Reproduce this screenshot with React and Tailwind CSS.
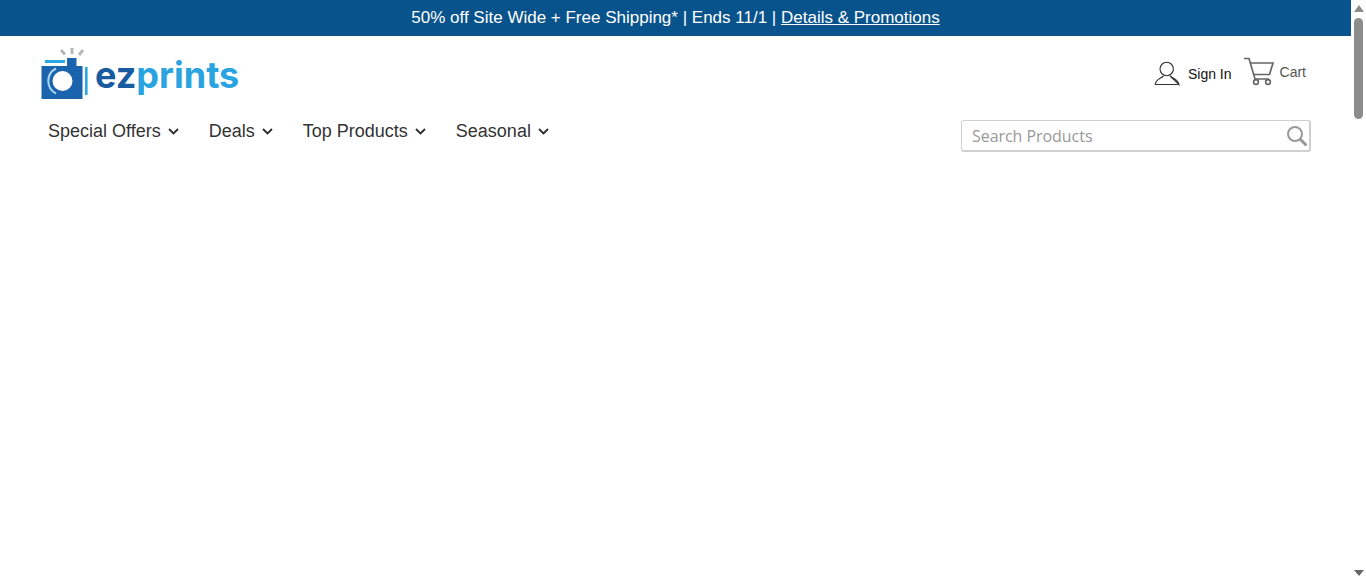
import React from "react";

function Logo() {
  return (
    <div className="flex items-end h-[52px]">
      <svg width="54" height="52" viewBox="0 0 54 52" className="shrink-0">
        <path d="M21 3 L25 7.5" stroke="#b5b8bb" strokeWidth="3" />
        <path d="M32 1 L32 7" stroke="#b5b8bb" strokeWidth="3" />
        <path d="M43 3 L39 8" stroke="#b5b8bb" strokeWidth="3" />
        <path d="M1.5 19 V52 H42.5 V19 H36.5 V11 H27 V19 Z" fill="#1a63ad" />
        <rect x="5" y="13" width="20" height="3" fill="#29a9e1" />
        <rect x="45" y="20" width="2.6" height="28" fill="#29a9e1" />
        <circle cx="22.5" cy="34" r="10" fill="#fff" />
        <path d="M16 46.5 A14 14 0 0 1 16 21.5" fill="none" stroke="#a8d6f0" strokeWidth="2" />
      </svg>
      <span className="ml-[1px] font-['Inter',sans-serif] font-bold text-[36px] leading-[40px] mb-[3px] relative top-[-1px]">
        <span className="text-[#175ba0]">ez</span>
        <span className="text-[#29a4e0]">prints</span>
      </span>
    </div>
  );
}

function Chevron() {
  return (
    <svg width="11" height="7" viewBox="0 0 11 7" className="ml-[7px] mt-[1px]" fill="none">
      <path d="M1 1 L5.5 5.5 L10 1" stroke="#2d2d2d" strokeWidth="1.8" />
    </svg>
  );
}

function NavItem({ label }) {
  return (
    <a className="flex items-center text-[18px] leading-[24px] text-[#333]">
      {label}
      <Chevron />
    </a>
  );
}

export default function App() {
  return (
    <div className="flex h-[581px] overflow-hidden bg-white font-['Liberation_Sans',Arial,sans-serif]">
      <div className="flex-1 min-w-0">
        <div className="h-[36px] bg-[#09538c] flex items-center justify-center text-white text-[17px] leading-[20px]">
          <span>50% off Site Wide + Free Shipping* | Ends 11/1 | <a className="underline">Details &amp; Promotions</a></span>
        </div>
        <div className="pl-[40px] pr-[44px] pt-[11px] flex items-start justify-between">
          <Logo />
          <div className="flex items-start mt-[12px]">
            <svg width="26" height="25" viewBox="0 0 26 25" fill="none" className="mt-[2px]">
              <circle cx="12.7" cy="8" r="6.7" stroke="#333" strokeWidth="1.1" />
              <path d="M1 23.5 C2 18 7 17.5 9.5 15 M16 15 C18.5 17.5 24 18 25 23.5 Z M1 23.5 H25" stroke="#333" strokeWidth="1.1" />
            </svg>
            <span className="ml-[8px] mt-[6px] text-[14px] leading-[18px] text-[#111]">Sign In</span>
            <svg width="31" height="29" viewBox="0 0 31 29" fill="none" className="ml-[11px] mt-[-2px]">
              <path d="M1 1.5 H6 L12 22 H26" stroke="#666" strokeWidth="1.7" />
              <path d="M7 6 H30 L26.5 17.5 H10" stroke="#666" strokeWidth="1.7" />
              <circle cx="13" cy="25" r="2.4" stroke="#666" strokeWidth="1.6" />
              <circle cx="25" cy="25" r="2.4" stroke="#666" strokeWidth="1.6" />
            </svg>
            <span className="ml-[6px] mr-[1px] mt-[4px] text-[14px] leading-[18px] text-[#555]">Cart</span>
          </div>
        </div>
        <div className="pl-[48px] pr-[40px] flex items-start justify-between mt-[21px]">
          <nav className="flex items-center gap-[30px] mt-[-1px]">
            <NavItem label="Special Offers" />
            <NavItem label="Deals" />
            <NavItem label="Top Products" />
            <NavItem label="Seasonal" />
          </nav>
          <div className="w-[350px] h-[32px] border border-[#d0d0d0] border-r-2 border-b-2 rounded-[3px] flex items-center justify-between pl-[10px] pr-[1px]">
            <span className="font-['Open_Sans',sans-serif] text-[16px] leading-[20px] tracking-[-0.05px] text-[#999]">Search Products</span>
            <svg width="22" height="22" viewBox="0 0 22 22" fill="none">
              <circle cx="9" cy="9" r="7" stroke="#999" strokeWidth="2" />
              <path d="M14 14 L20.5 20.5" stroke="#999" strokeWidth="3" />
            </svg>
          </div>
        </div>
      </div>
      <div className="w-[15px] shrink-0 bg-white flex flex-col items-center">
        <svg width="10" height="7" viewBox="0 0 10 7" className="mt-[5px]"><path d="M5 0 L10 7 H0 Z" fill="#8a8a8a" /></svg>
        <div className="w-[9px] h-[101px] mt-[6px] rounded-full bg-[#8c8c8c]" />
        <div className="flex-1" />
        <svg width="10" height="6" viewBox="0 0 10 6" className="mb-[5px]"><path d="M0 0 H10 L5 6 Z" fill="#666" /></svg>
      </div>
    </div>
  );
}
